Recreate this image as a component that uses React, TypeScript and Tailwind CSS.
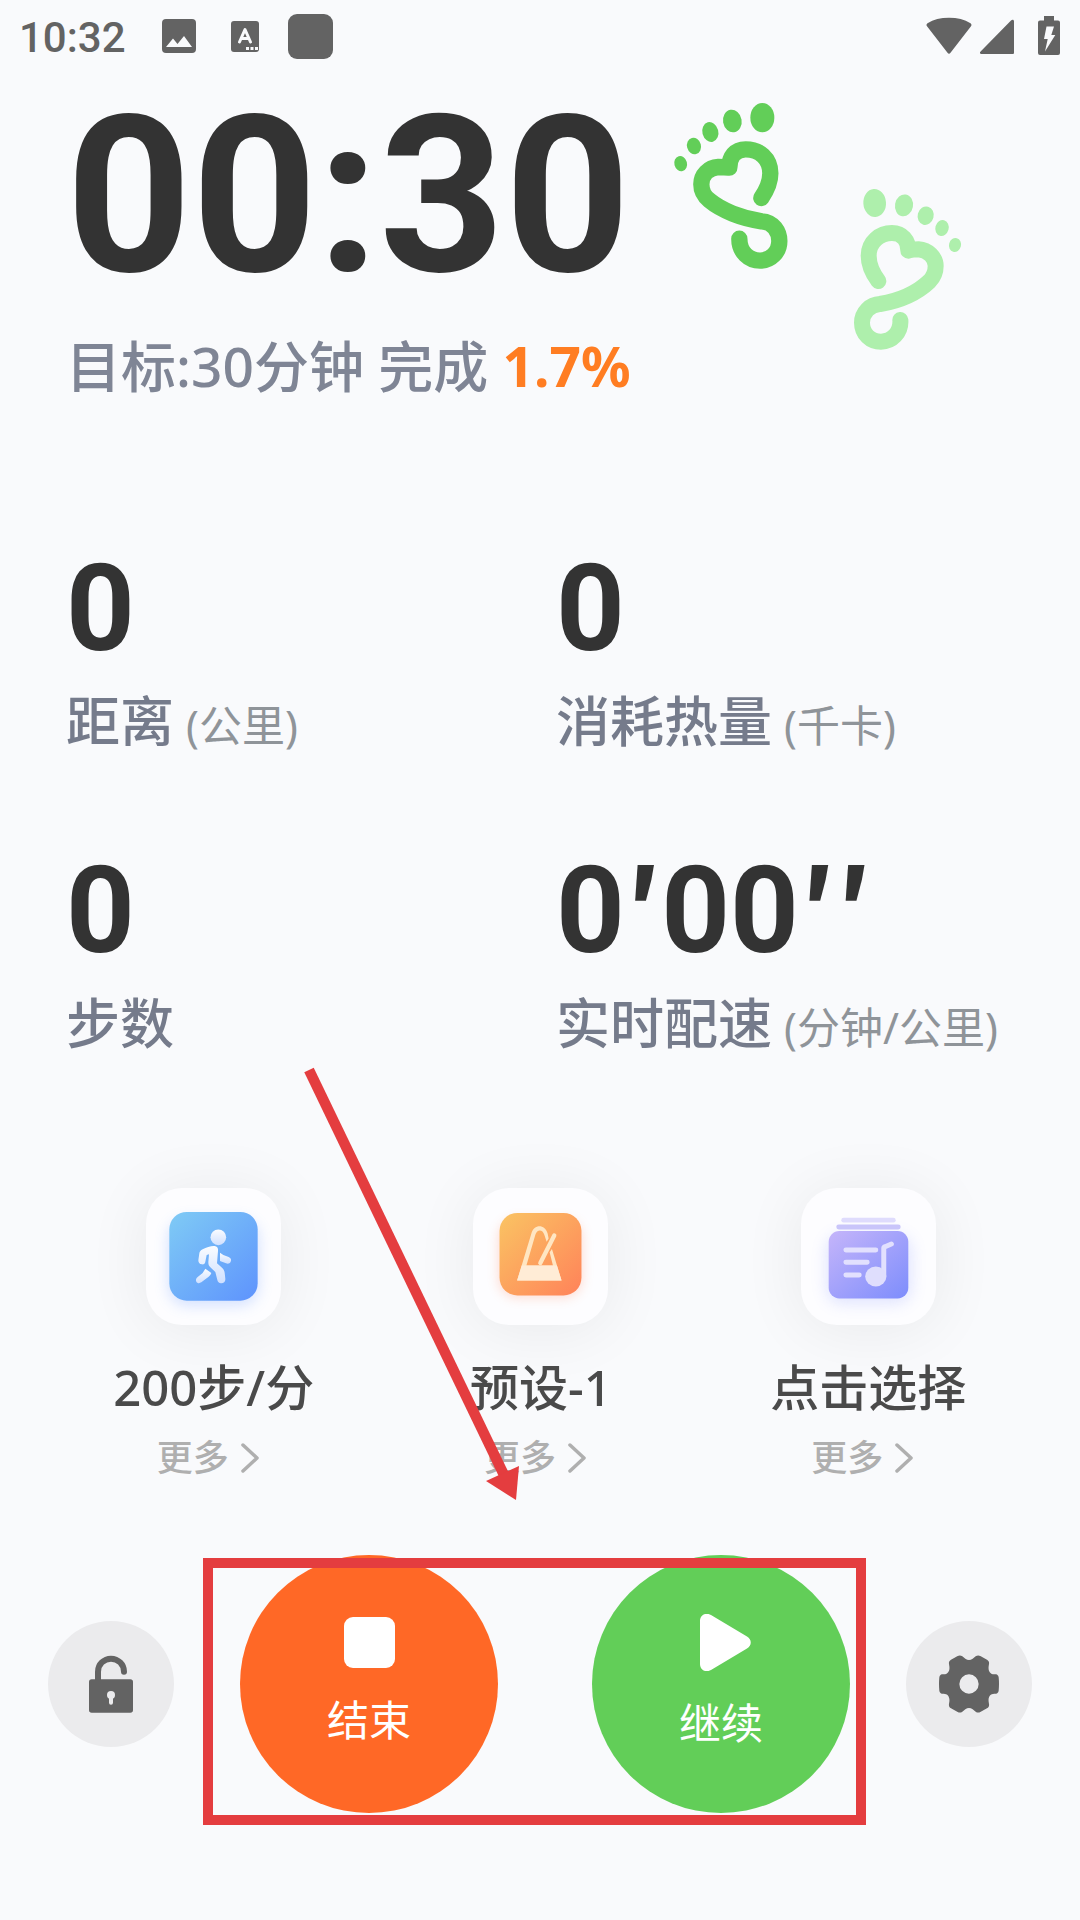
import type { ReactNode } from "react";

interface Stat {
	value: string;
	label: string;
	unit?: string;
}

interface Shortcut {
	label: string;
	icon: ReactNode;
}

const StatusBar = () => (
	<div className="flex h-[72px] items-center pr-5 pl-[19px] text-[#636363]">
		<span className="pt-1 font-['Roboto',sans-serif] text-[42px] leading-[64px] font-medium">
			10:32
		</span>
		<svg viewBox="0 0 34 34" className="ml-9 size-[34px]">
			<rect width="34" height="34" rx="4" fill="currentColor" />
			<path d="M4 28 11 19.500l4.500 5.500L22 17l8 11z" fill="#f9fafc" />
		</svg>
		<svg viewBox="0 0 28 31" className="ml-[35px] h-[31px] w-[28px]">
			<rect width="28" height="31" rx="3" fill="currentColor" />
			<path
				d="M8.500 21 14 8.500 19.500 21M10.500 17.500h7"
				fill="none"
				stroke="#f9fafc"
				strokeWidth="3"
				strokeLinecap="round"
				strokeLinejoin="round"
			/>
			<path d="M15 26h3v3h-3zM19.500 26h3v3h-3zM24 26h3v3h-3z" fill="#f9fafc" />
		</svg>
		<span className="ml-[29px] size-[45px] rounded-[9px] bg-[#636363]" />

		<div className="ml-auto flex items-center">
			<svg viewBox="0 0 46 40" className="h-[40px] w-[46px]" fill="currentColor">
				<path d="M1.200 10.500C.2 9.300.3 8 1.500 7.200 7.500 3.500 14.500 1.800 23 1.800s15.500 1.700 21.500 5.400c1.200.8 1.300 2.100.3 3.300L24.500 36.800c-.9 1.200-2.100 1.200-3 0z" />
			</svg>
			<svg viewBox="0 0 34 40" className="ml-2 h-[40px] w-[34px]" fill="currentColor">
				<path d="M31 4.500c1.500-1.300 3-.8 3 1V36.500c0 1-.5 1.500-1.500 1.500H1.500C-.3 38-.5 36.500.6 35.400z" />
			</svg>
			<svg viewBox="0 0 22 40" className="ml-6 h-[40px] w-[22px]">
				<path
					d="M6 0h10v4.500h4q2 0 2 2V37q0 2-2 2H2q-2 0-2-2V6.500q0-2 2-2h4z"
					fill="currentColor"
				/>
				<path d="M8.500 10.500h7.500l-2.700 8.500h4L7 35.500l2.700-12.500H6z" fill="#f9fafc" />
			</svg>
		</div>
	</div>
);

const Footprints = () => (
	<svg
		viewBox="66 36 876 750"
		className="mt-[30px] ml-[34px] h-[250px] w-[292px] shrink-0"
		fill="none"
		strokeWidth="49"
		strokeLinecap="round"
		strokeLinejoin="round"
	>
		<path
			stroke="#62ce58"
			d="M334 324C352 298 361 275 361 250C361 205 328 178 287 178C255 178 238 200 238 233C225 231 215 231 205 231C175 233 154 255 154 283C154 308 165 320 178 331C215 362 275 385 335 394C370 396 388 425 388 453C388 487 362 512 330 512C297 512 268 487 268 446"
		/>
		<g fill="#62ce58">
			<ellipse cx="337" cy="83" rx="36" ry="44" />
			<ellipse cx="247" cy="93" rx="28" ry="34" transform="rotate(-10 247 93)" />
			<ellipse cx="181" cy="126" rx="24" ry="30" transform="rotate(-15 181 126)" />
			<ellipse cx="132" cy="168" rx="21" ry="25" transform="rotate(-15 132 168)" />
			<ellipse cx="92" cy="221" rx="19" ry="23" transform="rotate(-15 92 221)" />
		</g>
		<path
			stroke="#aeefac"
			strokeWidth="48"
			d="M685 573C665 546 656 520 656 497C656 455 690 429 726 429C757 429 775 452 775 482C785 478 795 478 805 478C835 480 857 503 857 528C857 550 850 562 838 574C800 610 750 632 690 642C660 643 636 668 636 698C636 732 662 755 693 755C725 755 754 728 751 690"
		/>
		<g fill="#aeefac">
			<ellipse cx="674" cy="339" rx="34" ry="42" transform="rotate(-4 674 339)" />
			<ellipse cx="762" cy="346" rx="27" ry="33" transform="rotate(10 762 346)" />
			<ellipse cx="827" cy="377" rx="24" ry="28" transform="rotate(15 827 377)" />
			<ellipse cx="876" cy="414" rx="20" ry="24" transform="rotate(15 876 414)" />
			<ellipse cx="915" cy="465" rx="18" ry="21" transform="rotate(15 915 465)" />
		</g>
	</svg>
);

const WalkIcon = () => (
	<svg viewBox="0 0 405 411" className="size-full">
		<defs>
			<linearGradient id="walkBg" x1="0" y1="0" x2="1" y2="1">
				<stop offset="0" stopColor="#7fcbf5" />
				<stop offset="1" stopColor="#5e93fd" />
			</linearGradient>
			<linearGradient id="walkFg" x1="0" y1="0" x2="0" y2="1">
				<stop offset="0" stopColor="#fafcff" />
				<stop offset="1" stopColor="#cfe0ff" />
			</linearGradient>
			<filter id="walkGlow" x="-30%" y="-30%" width="160%" height="160%">
				<feGaussianBlur stdDeviation="20" />
			</filter>
		</defs>
		<rect x="66" y="92" width="273" height="262" rx="60" fill="#5e93fd" opacity=".25" filter="url(#walkGlow)" />
		<rect x="70" y="72" width="265" height="266" rx="52" fill="url(#walkBg)" />
		<g fill="url(#walkFg)">
			<circle cx="217" cy="148" r="23.500" />
			<path d="M170 184C182 177 196 173 206 174C214 175 217 180 216 189L213 226L228 239C233 244 235 248 236 254L238 272C239 281 232 287 225 286C219 285 215 282 214 276L208 252L193 238C188 233 187 229 187 222L189 199L182 201L178 221C177 227 173 230 168 229C160 229 157 224 157 217L160 196C161 190 164 187 170 184Z" />
			<path d="M222 194L232 201L248 207C255 210 257 216 254 221C251 227 246 228 240 226L222 219Z" />
			<path d="M178 242L196 255C194 261 189 266 183 270L166 283C160 287 154 286 151 281C148 275 151 270 156 266L170 255Z" />
		</g>
	</svg>
);

const MetronomeIcon = () => (
	<svg viewBox="0 0 405 413" className="size-full">
		<defs>
			<linearGradient id="metroBg" x1="0" y1="0" x2="1" y2="1">
				<stop offset="0" stopColor="#fac463" />
				<stop offset="1" stopColor="#ff8259" />
			</linearGradient>
			<filter id="metroGlow" x="-30%" y="-30%" width="160%" height="160%">
				<feGaussianBlur stdDeviation="18" />
			</filter>
		</defs>
		<rect x="76" y="94" width="252" height="236" rx="56" fill="#ff8259" opacity=".28" filter="url(#metroGlow)" />
		<rect x="79" y="75" width="247" height="249" rx="54" fill="url(#metroBg)" />
		<path
			d="M132 279L175 137C183 109 215 108 224 137L227 152L221 162L214 141C209 124 192 124 187 141L160 234H240L230 194L237 184L266 279Z"
			fill="#ffe6c2"
		/>
		<path d="M160 234H240L252 234L266 279H132L146 234Z" fill="#ffecd6" />
		<path d="M202 226L244 143" stroke="#ffe6c2" strokeWidth="13" strokeLinecap="round" />
	</svg>
);

const PlaylistIcon = () => (
	<svg viewBox="0 0 396 413" className="size-full">
		<defs>
			<linearGradient id="listBg" x1="0" y1="0" x2="1" y2="1">
				<stop offset="0" stopColor="#c5b5fa" />
				<stop offset="1" stopColor="#7d8dfc" />
			</linearGradient>
			<filter id="listGlow" x="-30%" y="-30%" width="160%" height="160%">
				<feGaussianBlur stdDeviation="22" />
			</filter>
		</defs>
		<rect x="70" y="140" width="258" height="210" rx="50" fill="#7d8dfc" opacity=".22" filter="url(#listGlow)" />
		<rect x="116" y="90" width="164" height="14" rx="7" fill="#dfdcfd" />
		<rect x="101" y="110" width="194" height="15" rx="7.500" fill="#c9c5fa" />
		<rect x="78" y="130" width="240" height="203" rx="32" fill="url(#listBg)" />
		<g stroke="#e2e0fe" strokeWidth="15" strokeLinecap="round" fill="none">
			<path d="M130 187H220M130 224H194M130 262H170" />
			<path d="M244 265V182Q244 178 248 177L267 169" strokeLinejoin="round" />
		</g>
		<ellipse cx="220" cy="267" rx="32" ry="30" fill="#dfdefd" />
	</svg>
);

const stats: Stat[] = [
	{ value: "0", label: "距离", unit: "(公里)" },
	{ value: "0", label: "消耗热量", unit: "(千卡)" },
	{ value: "0", label: "步数" },
	{ value: "0′00′′", label: "实时配速", unit: "(分钟/公里)" },
];

const shortcuts: Shortcut[] = [
	{ label: "200步/分", icon: <WalkIcon /> },
	{ label: "预设-1", icon: <MetronomeIcon /> },
	{ label: "点击选择", icon: <PlaylistIcon /> },
];

export default function App() {
	return (
		<div className="relative min-h-screen overflow-hidden bg-[#f9fafc] font-['Noto_Sans','Noto_Sans_CJK_SC',sans-serif] text-[#333333]">
			<StatusBar />

			{/* Timer and goal */}
			<header className="flex items-start pl-[66px]">
				<div className="min-w-[572px] whitespace-nowrap">
					<h1 className="mt-[24px] font-['Roboto',sans-serif] text-[219px] leading-[200px] font-bold">
						00:30
					</h1>
					<p className="mt-[38px] text-[55px] leading-[64px] font-medium text-[#7f8595]">
						目标:30分钟 完成{" "}
						<span className="font-bold text-[#ff7d22]">1.7%</span>
					</p>
				</div>
				<Footprints />
			</header>

			{/* Live stats */}
			<dl className="mt-[151px] grid grid-cols-2 gap-y-[98px] pr-[34px] pl-[66px]">
				{stats.map(stat => (
					<div key={stat.label} className="flex flex-col-reverse whitespace-nowrap">
						<dt className="mt-5 text-[54px] leading-[64px] font-medium text-[#757b8b]">
							{stat.label}
							{stat.unit && (
								<span className="ml-3 text-[43px] leading-none font-normal text-[#8f9499]">
									{stat.unit}
								</span>
							)}
						</dt>
						<dd className="font-['Roboto',sans-serif] text-[120px] leading-[120px] font-bold">
							{stat.value.split(/(′+)/).map((part, i) =>
								part.startsWith("′") ? (
									<span
										key={i}
										className="font-['Noto_Sans_CJK_SC',sans-serif] text-[112px] leading-[96px]"
									>
										{part}
									</span>
								) : (
									part
								),
							)}
						</dd>
					</div>
				))}
			</dl>

			{/* Shortcuts */}
			<div className="mt-[133px] grid grid-cols-3 pr-[48px] pl-[50px]">
				{shortcuts.map(({ label, icon }) => (
					<button key={label} type="button" className="flex flex-col items-center">
						<span className="h-[137px] w-[135px] rounded-[36px] bg-[#fdfdff] shadow-[0_4px_64px_rgba(0,0,0,0.07)]">
							{icon}
						</span>
						<span className="mt-[34px] text-[49px] leading-[56px] font-medium text-[#4a4a4a]">
							{label}
						</span>
						<span className="mt-[23px] flex items-center gap-3 pr-3 text-[36px] leading-[40px] font-medium text-[#afafaf]">
							更多
							<svg
								viewBox="0 0 18 30"
								className="h-[30px] w-[18px]"
								fill="none"
								stroke="currentColor"
								strokeWidth="3.500"
								strokeLinecap="round"
								strokeLinejoin="round"
							>
								<path d="M2 2 16 15 2 28" />
							</svg>
						</span>
					</button>
				))}
			</div>

			{/* Controls */}
			<div className="mt-[77px] flex items-center px-12 pb-[107px]">
				<button
					type="button"
					aria-label="解锁"
					className="flex size-[126px] items-center justify-center rounded-full bg-[#ebebed]"
				>
					<svg viewBox="0 0 132 174" className="h-[58px] w-[44px]">
						<path
							d="M27 80V50a39 39 0 0 1 78 0"
							fill="none"
							stroke="#636363"
							strokeWidth="18"
							strokeLinecap="round"
						/>
						<rect y="73" width="132" height="100" rx="8" fill="#636363" />
						<circle cx="66" cy="120" r="12" fill="#ebebed" />
						<path d="M66 122V143" stroke="#ebebed" strokeWidth="12" strokeLinecap="round" />
					</svg>
				</button>

				<div className="relative ml-[66px] flex gap-[94px]">
					<button
						type="button"
						className="flex size-[258px] flex-col items-center rounded-full bg-[#ff6826] pt-[62px] text-[42px] leading-[56px] text-white"
					>
						<span className="size-[51px] rounded-[9px] bg-white" />
						<span className="mt-6">结束</span>
					</button>
					<button
						type="button"
						className="flex size-[258px] flex-col items-center rounded-full bg-[#62ce58] pt-[59px] text-[42px] leading-[56px] text-white"
					>
						<svg viewBox="0 0 51 57" className="ml-2 h-[57px] w-[51px]" fill="currentColor">
							<path d="M0 7C0 1 6-2 11 1L47 22.500C52 25.500 52 31.500 47 34.500L11 56C6 59 0 56 0 50Z" />
						</svg>
						<span className="mt-6">继续</span>
					</button>
					<div className="pointer-events-none absolute top-[3px] -right-4 -bottom-3 -left-[37px] border-[10px] border-[#e43d3f]" />
				</div>

				<button
					type="button"
					aria-label="设置"
					className="ml-auto flex size-[126px] items-center justify-center rounded-full bg-[#ebebed]"
				>
					<svg viewBox="0 0 180 172" className="h-[58px] w-[60px]" fill="#636363">
						<path
							fillRule="evenodd"
							d="M56 2C61-1 66 0 70 3L79 10Q90 18 101 10L110 3C114 0 119-1 124 2L144 13C149 16 151 20 150 26L149 33C147 46 153 57 166 57L171 57C175 58 178 61 179 66Q181 86 179 106C178 111 175 114 171 115L166 115C153 115 147 126 149 139L150 146C151 152 149 156 144 159L124 170C119 173 114 172 110 169L101 162Q90 154 79 162L70 169C66 172 61 173 56 170L36 159C31 156 29 152 30 146L31 139C33 126 27 115 14 115L9 115C5 114 2 111 1 106Q-1 86 1 66C2 61 5 58 9 57L14 57C27 57 33 46 31 33L30 26C29 20 31 16 36 13ZM90 57a29 29 0 1 0 0 58a29 29 0 1 0 0-58Z"
						/>
					</svg>
				</button>
			</div>

			{/* Arrow to the controls */}
			<svg
				viewBox="0 0 216 434"
				className="pointer-events-none absolute top-[1067px] left-[304px] h-[434px] w-[216px]"
				fill="#e43d3f"
			>
				<path d="M5 3 200 408" stroke="#e43d3f" strokeWidth="10.500" />
				<path d="M212 433 182 414 215 399z" />
			</svg>
		</div>
	);
}
